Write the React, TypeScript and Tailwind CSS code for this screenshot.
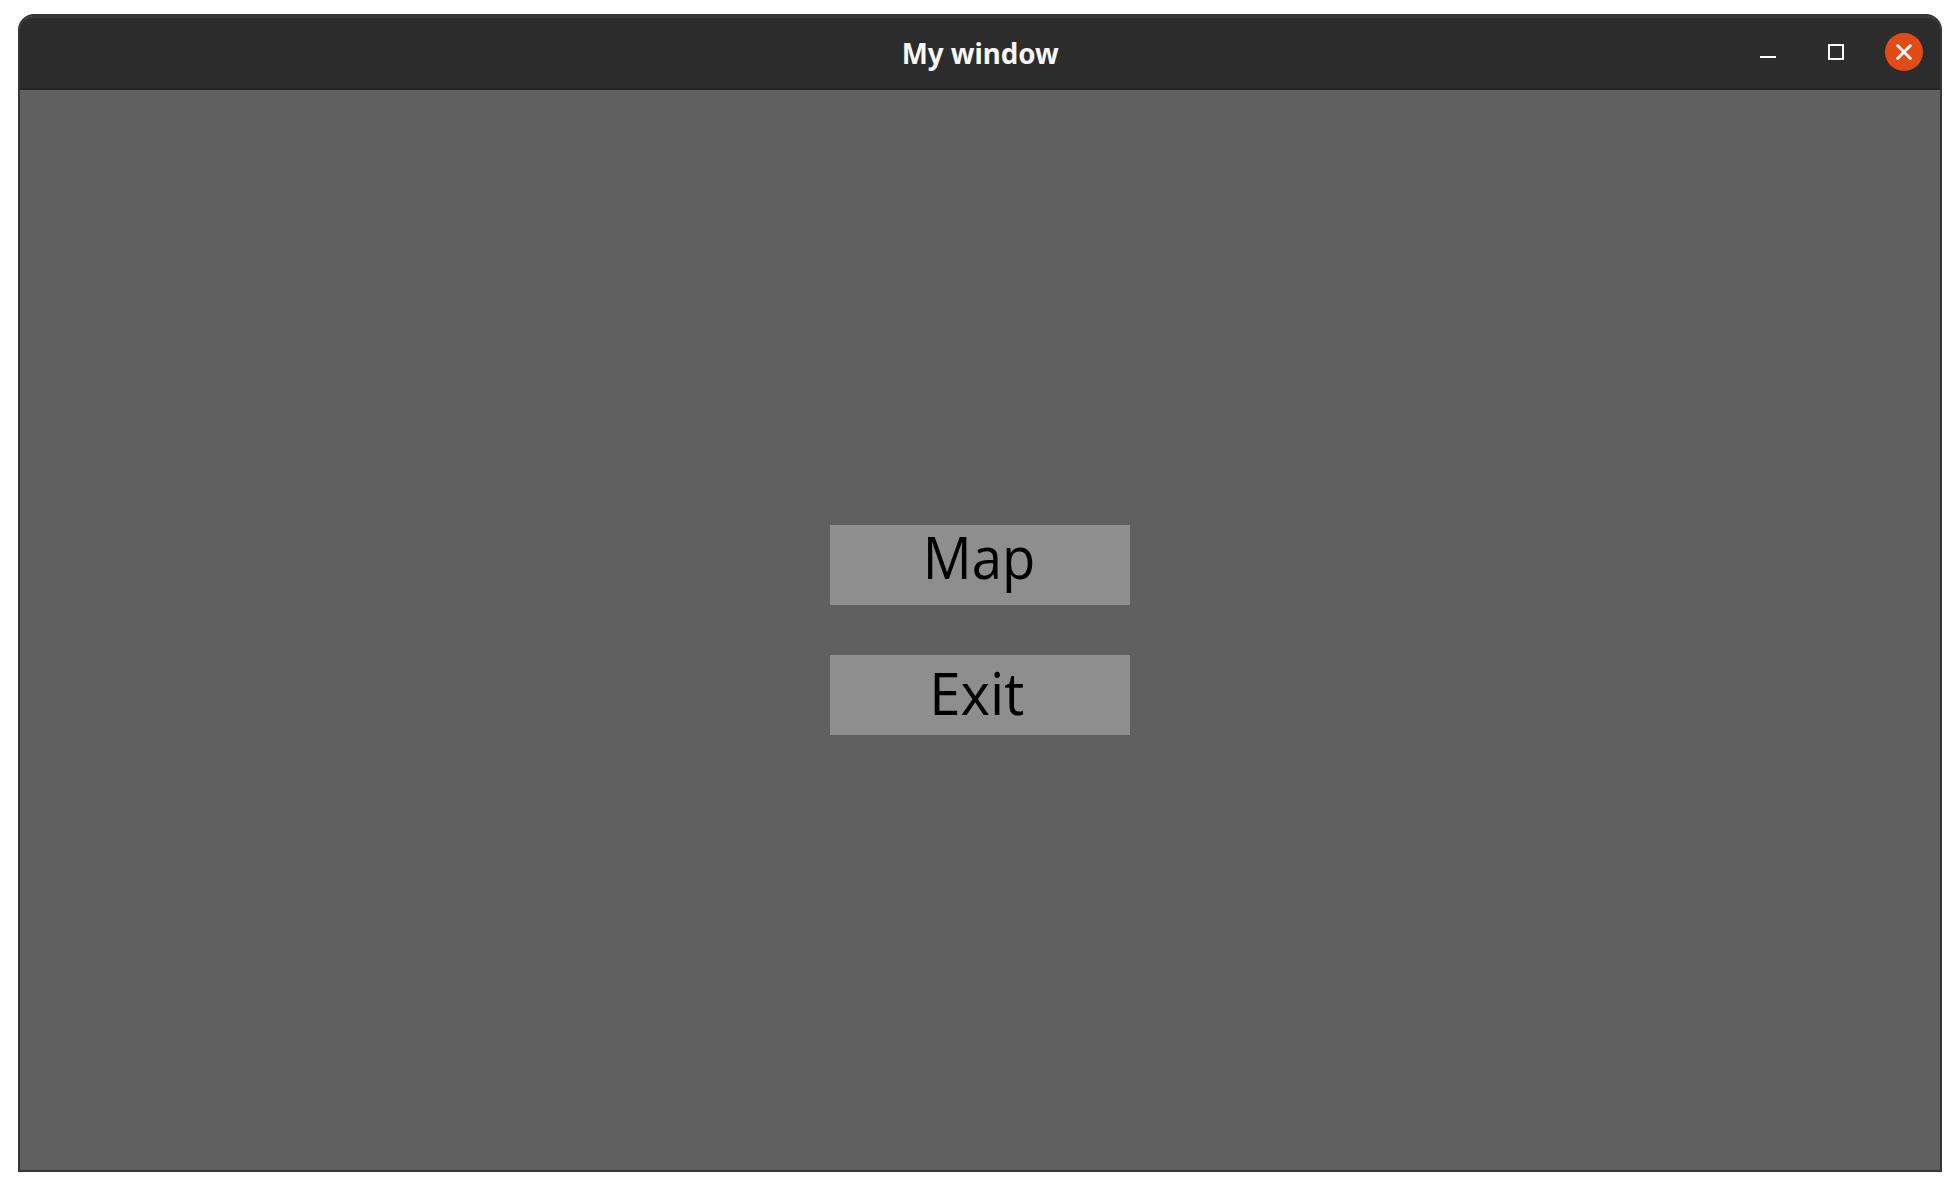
function TitleBar() {
  return (
    <header className="grid h-[74px] grid-cols-3 items-center border-t-2 border-b-2 border-t-[#383838] border-b-[#252525] bg-[#2c2c2c] rounded-t-[14px]">
      <div />
      <h1 className="flex justify-center pb-px font-['Noto_Sans'] text-[29px] leading-[36px] font-bold text-[#f7f7f7]">
        <span className="origin-center scale-x-[0.955] whitespace-nowrap">My window</span>
      </h1>
      <div className="flex items-center justify-end pr-[17px] pb-0.5">
        <button aria-label="Minimize" className="mr-[52px] flex h-4 w-4 items-end pb-0.5">
          <span className="h-0.5 w-4 bg-white" />
        </button>
        <button aria-label="Maximize" className="mr-[41px] h-4 w-4 border-2 border-[#f7f7f7]" />
        <button aria-label="Close" className="flex h-[38px] w-[38px] items-center justify-center rounded-full bg-[#e04b18]">
          <svg width="18" height="18" viewBox="0 0 18 18" fill="none" stroke="white" strokeWidth="2.8">
            <path d="M1.8 1.8 16.2 16.2M16.2 1.8 1.8 16.2" />
          </svg>
        </button>
      </div>
    </header>
  );
}

export default function App() {
  return (
    <div className="h-[1190px] w-[1960px] overflow-hidden bg-white px-[18px] pt-[14px] pb-[18px]">
      <main className="flex h-[1158px] flex-col overflow-hidden rounded-t-[16px] border-2 border-[#353535] bg-[#606060]">
        <TitleBar />
        <section className="flex flex-1 flex-col items-center gap-[50px] pt-[435px] font-['Open_Sans'] text-[59px] leading-[80px] text-black">
          <button className="flex h-20 w-[300px] justify-center bg-[#8e8e8e]">
            <span className="h-20 -translate-x-px -translate-y-[9px] scale-x-[0.922]">Map</span>
          </button>
          <button className="flex h-20 w-[300px] justify-center bg-[#8e8e8e]">
            <span className="h-20 -translate-x-[3px] -translate-y-[3px] scale-x-[0.955]">Exit</span>
          </button>
        </section>
      </main>
    </div>
  );
}
